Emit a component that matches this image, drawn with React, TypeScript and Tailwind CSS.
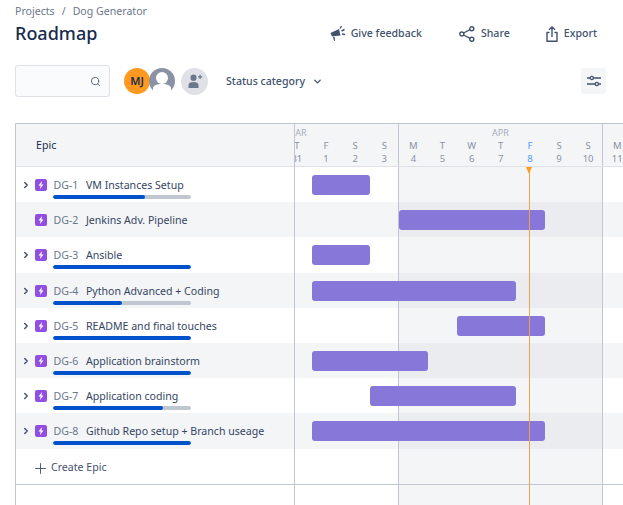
import { ChevronDown, ChevronRight, Plus, Search } from "lucide-react";

const EPICS = [
  { key: "DG-1", name: "VM Instances Setup", done: 92, start: 312, end: 370, expand: true },
  { key: "DG-2", name: "Jenkins Adv. Pipeline", done: 0, start: 399, end: 545, expand: false },
  { key: "DG-3", name: "Ansible", done: 138, start: 312, end: 370, expand: true },
  { key: "DG-4", name: "Python Advanced + Coding", done: 69, start: 312, end: 516, expand: true },
  { key: "DG-5", name: "README and final touches", done: 138, start: 457, end: 545, expand: true },
  { key: "DG-6", name: "Application brainstorm", done: 138, start: 312, end: 428, expand: true },
  { key: "DG-7", name: "Application coding", done: 110, start: 370, end: 516, expand: true },
  { key: "DG-8", name: "Github Repo setup + Branch useage", done: 138, start: 312, end: 545, expand: true },
];

const DAYS = [
  ["T", "31"], ["F", "1"], ["S", "2"], ["S", "3"], ["M", "4"], ["T", "5"], ["W", "6"],
  ["T", "7"], ["F", "8"], ["S", "9"], ["S", "10"], ["M", "11"],
];

function EpicIcon() {
  return (
    <span className="flex h-3 w-3 shrink-0 items-center justify-center rounded-[2px] bg-[#904ee2]">
      <svg width="10" height="10" viewBox="0 0 8 8">
        <path d="M4.800 0.800 2 4.400h1.700L3.200 7.200 6 3.600H4.300z" fill="#fff" />
      </svg>
    </span>
  );
}

function Megaphone() {
  return (
    <svg width="16" height="17" viewBox="0 0 16 17" fill="#42526e">
      <path d="M0.500 8 9 4l1.500 6.500-5 .500-3.500.500-1.500-3.500z" />
      <path d="M3 12 4.500 11.800 5 15.800l-1 .300z" />
      <path d="M10 3.500 11.500 1M11.500 6l3-1.500M12 9l3 .500" stroke="#42526e" strokeWidth="1.400" fill="none" />
    </svg>
  );
}

function ShareIcon() {
  return (
    <svg width="16" height="16" viewBox="0 0 16 16" fill="none" stroke="#42526e" strokeWidth="1.400">
      <circle cx="2.800" cy="8" r="2" />
      <circle cx="12.800" cy="2.800" r="2" />
      <circle cx="12.800" cy="13.200" r="2" />
      <path d="M4.600 7 11 3.700M4.600 9 11 12.300" />
    </svg>
  );
}

function ExportIcon() {
  return (
    <svg width="12" height="16" viewBox="0 0 12 16" fill="none" stroke="#42526e" strokeWidth="1.400">
      <path d="M3.500 6.500H1v8.700h10V6.500H8.500" strokeLinejoin="round" />
      <path d="M6 11V1M3 3.800 6 1l3 2.800" />
    </svg>
  );
}

function FiltersIcon() {
  return (
    <svg width="16" height="14" viewBox="0 0 16 14" fill="none" stroke="#42526e" strokeWidth="1.300">
      <path d="M1 4h3M7.500 4H15M1 10h8M12.500 10H15" />
      <circle cx="5.800" cy="4" r="1.600" />
      <circle cx="10.800" cy="10" r="1.600" />
    </svg>
  );
}

function AvatarGlyph() {
  return (
    <svg width="26" height="26" viewBox="0 0 26 26">
      <circle cx="13" cy="13" r="13" fill="#8993a4" />
      <rect x="7" y="4" width="12" height="12" rx="6" fill="#fff" />
      <path d="M4 23v-2.500c0-3 3.500-4.500 9-4.500s9 1.500 9 4.500V23a13 13 0 0 1-18 0z" fill="#fff" />
    </svg>
  );
}

function AddPerson() {
  return (
    <svg width="16" height="16" viewBox="0 0 16 16" fill="#6b778c">
      <rect x="3.500" y="1.500" width="6" height="6.500" rx="3" />
      <path d="M1.500 15v-3c0-2 2-3 5-3s5 1 5 3v3z" />
      <path d="M11 3.200h1.500V1.700h1.200v1.500h1.500v1.200h-1.500v1.500h-1.200V4.400H11z" />
    </svg>
  );
}

export default function App() {
  return (
    <div className="h-[505px] w-[623px] overflow-hidden bg-white font-['Noto_Sans',sans-serif] text-[#172b4d]">
      <div className="flex h-[65px] items-start justify-between pl-[15px] pr-[26px]">
        <div>
          <p className="mt-[3px] flex h-[18px] items-center gap-[7px] text-[10.6px] text-[#6b778c]">
            <span>Projects</span>
            <span>/</span>
            <span>Dog Generator</span>
          </p>
          <h1 className="-mt-[1px] text-[18px] leading-[26px] font-medium text-[#172b4d]">Roadmap</h1>
        </div>
        <div className="mt-[25px] flex items-center text-[10.6px] font-medium text-[#42526e]">
          <span className="flex items-center gap-[5px]">
            <Megaphone />
            Give feedback
          </span>
          <span className="ml-[37px] flex items-center gap-[6px]">
            <ShareIcon />
            Share
          </span>
          <span className="ml-[36px] flex items-center gap-[6px]">
            <ExportIcon />
            Export
          </span>
        </div>
      </div>

      <div className="flex h-[32px] items-center pl-[15px] pr-[17px]">
        <div className="flex h-[32px] w-[95px] items-center justify-end rounded-[3px] border border-[#dfe1e6] bg-[#fafbfc] pr-[8px]">
          <Search size={11} strokeWidth={2} className="text-[#505f79]" />
        </div>
        <div className="ml-[14px] flex items-center">
          <span className="flex h-[26px] w-[26px] items-center justify-center rounded-full bg-[#ff991f] text-[11px] font-semibold text-[#172b4d]">
            MJ
          </span>
          <span className="-ml-[1px] rounded-full">
            <AvatarGlyph />
          </span>
        </div>
        <span className="ml-[6px] flex h-[27px] w-[27px] items-center justify-center rounded-full bg-[#dfe1e6]">
          <AddPerson />
        </span>
        <span className="ml-[18px] flex items-center pt-[2px] text-[10.6px] font-medium text-[#42526e]">
          Status category
          <ChevronDown size={11} strokeWidth={3} className="ml-[7px]" />
        </span>
        <span className="ml-auto flex h-[26px] w-[25px] items-center justify-center rounded-[3px] bg-[#f4f5f7]">
          <FiltersIcon />
        </span>
      </div>

      <div className="mt-[26px] ml-[15px] flex h-[400px] border-t border-l border-[#c1c7d0]">
        <div className="w-[279px] shrink-0 border-r border-[#c1c7d0]">
          <div className="flex h-[43px] items-center border-b border-[#dfe1e6] bg-[#f4f5f7] pt-[2px] pl-[20px] text-[10.6px] text-[#172b4d]">
            Epic
          </div>
          {EPICS.map((e, i) => (
            <div
              key={e.key}
              className={
                i % 2 === 1
                  ? "relative flex h-[35.2px] items-start bg-[#f4f5f7] pt-[12px] text-[10.6px] leading-[12px]"
                  : "relative flex h-[35.2px] items-start bg-white pt-[12px] text-[10.6px] leading-[12px]"
              }
            >
              <span className="flex w-[15px] justify-end">
                {e.expand && <ChevronRight size={10} strokeWidth={3.5} className="mt-[1px] text-[#42526e]" />}
              </span>
              <span className="ml-[4px]">
                <EpicIcon />
              </span>
              <span className="ml-[6.5px] text-[#6b778c]">{e.key}</span>
              <span className="ml-[7.5px] whitespace-nowrap text-[#344563]">{e.name}</span>
              {e.done > 0 && (
                <div className="absolute top-[28px] left-[37px] h-[4px] w-[138px] overflow-hidden rounded-[2px] bg-[#c1c7d0]">
                  <div className="h-full rounded-[2px] bg-[#0052cc]" style={{ width: e.done }} />
                </div>
              )}
            </div>
          ))}
          <div className="flex h-[36px] items-center border-b border-[#c1c7d0] pt-[4px] pl-[15.5px] text-[10.6px] text-[#42526e]">
            <Plus size={17} strokeWidth={1.3} />
            <span className="ml-[2.500px]">Create Epic</span>
          </div>
        </div>

        <div className="relative flex-1 overflow-hidden">
          <div className="flex h-[43px] border-b border-[#dfe1e6] bg-[#f4f5f7]">
            <div className="w-[104px] shrink-0 overflow-hidden border-r border-[#c1c7d0]">
              <p className="-ml-[8px] h-[15px] pt-[3px] text-[9px] leading-[12px] text-[#a5adba]">MAR</p>
            </div>
            <p className="w-[204px] shrink-0 border-r border-[#c1c7d0] pt-[3px] text-center text-[9px] leading-[12px] text-[#a5adba]">
              APR
            </p>
          </div>
          <div className="absolute top-[16px] -left-[12.700px] flex">
            {DAYS.map(([d, n], i) => (
              <div
                key={i}
                className={
                  i === 8
                    ? "w-[29.14px] text-center text-[9.500px] leading-[12.5px] text-[#4c9aff]"
                    : "w-[29.14px] text-center text-[9.500px] leading-[12.5px] text-[#8993a4]"
                }
              >
                <p>{d}</p>
                <p>{n}</p>
              </div>
            ))}
          </div>
          {EPICS.map((e, i) => (
            <div key={e.key} className="relative flex h-[35.2px]">
              <div className={i % 2 === 1 ? "w-[104px] shrink-0 border-r border-[#c1c7d0] bg-[#f4f5f7]" : "w-[104px] shrink-0 border-r border-[#c1c7d0] bg-white"} />
              <div className={i % 2 === 1 ? "w-[204px] shrink-0 border-r border-[#c1c7d0] bg-[#ebecf0]" : "w-[204px] shrink-0 border-r border-[#c1c7d0] bg-[#f4f5f7]"} />
              <div className={i % 2 === 1 ? "flex-1 bg-[#f4f5f7]" : "flex-1 bg-white"} />
              <div
                className="absolute top-[8px] h-[20px] rounded-[3px] bg-[#8777d9]"
                style={{ left: e.start - 295, width: e.end - e.start }}
              />
            </div>
          ))}
          <div className="flex h-[36px] border-b border-[#c1c7d0]">
            <div className="w-[104px] shrink-0 border-r border-[#c1c7d0]" />
            <div className="w-[204px] shrink-0 border-r border-[#c1c7d0] bg-[#f4f5f7]" />
          </div>
          <div className="flex h-[21px]">
            <div className="w-[104px] shrink-0 border-r border-[#c1c7d0]" />
            <div className="w-[204px] shrink-0 border-r border-[#c1c7d0] bg-[#f4f5f7]" />
          </div>
          <div className="absolute top-[43px] bottom-0 left-[234px] w-px bg-[#efa24a]" />
          <div className="absolute top-[43px] left-[231px] h-0 w-0 border-x-[3.500px] border-t-[7px] border-x-transparent border-t-[#ff991f]" />
        </div>
      </div>
    </div>
  );
}
